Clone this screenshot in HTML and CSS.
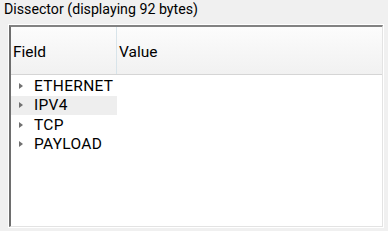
FILE: index.html
```html
<!DOCTYPE html>
<html lang="en">
<head>
    <meta charset="UTF-8">
    <title>Dissector</title>
    <link rel="stylesheet" href="styles.css">
</head>
<body>
    <div class="title">Dissector (displaying 92 bytes)</div>
    <div class="tree">
        <div class="tree-header">
            <div class="col col-field">Field</div>
            <div class="col col-value">Value</div>
        </div>
        <div class="tree-body">
            <div class="row"><span class="arrow"></span><span class="name">ETHERNET</span></div>
            <div class="row selected"><span class="arrow"></span><span class="name">IPV4</span></div>
            <div class="row"><span class="arrow"></span><span class="name">TCP</span></div>
            <div class="row"><span class="arrow"></span><span class="name">PAYLOAD</span></div>
        </div>
    </div>
</body>
</html>
```

FILE: styles.css
```css
body {
    margin: 0;
    width: 388px;
    height: 231px;
    background-color: #f0f0f0;
    font-family: Roboto, "Liberation Sans", sans-serif;
    font-size: 14px;
    color: #000;
    overflow: hidden;
}

.title {
    height: 25px;
    line-height: 18px;
    padding-left: 4px;
    font-size: 14.2px;
}

.tree {
    margin-left: 9px;
    width: 374px;
    height: 202px;
    box-sizing: border-box;
    border-top: 2px solid #828282;
    border-left: 2px solid #6e6e6e;
    border-right: 1px solid #e3e3e3;
    border-bottom: 1px solid #e3e3e3;
    background: #fff;
    outline: 1px solid #fff;
    font-size: 15.5px;
}

.tree-header {
    display: flex;
    height: 47px;
    background: linear-gradient(#fcfcfc, #f1f1f1);
    border-bottom: 1px solid #d5d5d5;
}

.col {
    display: flex;
    align-items: center;
    padding-left: 2px;
    padding-top: 2px;
}

.col-field {
    width: 103px;
    border-right: 1px solid #d8e4ea;
}

.col-value {
    flex: 1;
}

.tree-body {
    padding-top: 1px;
}

.row {
    display: flex;
    align-items: center;
    width: 106px;
    height: 19.5px;
}

.row.selected {
    background-color: #eeeeee;
}

.arrow {
    width: 0;
    height: 0;
    margin-left: 8px;
    margin-right: 11px;
    border-top: 3.5px solid transparent;
    border-bottom: 3.5px solid transparent;
    border-left: 4px solid #707070;
}

.name {
    letter-spacing: 0.3px;
}
```
